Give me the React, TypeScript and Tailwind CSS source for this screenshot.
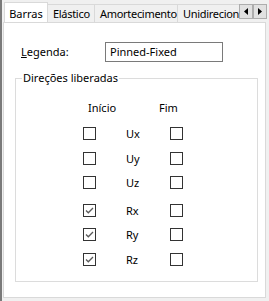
import React from 'react';

const font = { fontFamily: '"Segoe UI", "Noto Sans", sans-serif' };

interface Dir {
  label: string;
  start: boolean;
  end: boolean;
  gap: string;
}

const dirs: Dir[] = [
  { label: 'Ux', start: false, end: false, gap: 'mt-[11px]' },
  { label: 'Uy', start: false, end: false, gap: 'mt-[12px]' },
  { label: 'Uz', start: false, end: false, gap: 'mt-[11px]' },
  { label: 'Rx', start: true, end: false, gap: 'mt-[15px]' },
  { label: 'Ry', start: true, end: false, gap: 'mt-[11px]' },
  { label: 'Rz', start: true, end: false, gap: 'mt-[12px]' },
];

function Check({ checked }: { checked: boolean }) {
  return (
    <div className="w-[13px] h-[13px] border border-[#333333] bg-white shrink-0">
      {checked && (
        <svg width="11" height="11" viewBox="0 0 11 11">
          <path d="M2 5.5 L4.3 7.8 L9 3" fill="none" stroke="#5a5a5a" strokeWidth="1.3" />
        </svg>
      )}
    </div>
  );
}

function Arrow({ dir }: { dir: 'left' | 'right' }) {
  return (
    <div className="w-[14px] h-[15px] bg-[#e1e1e1] border border-[#adadad] flex items-center justify-center">
      <svg width="4" height="7" viewBox="0 0 4 7">
        {dir === 'left' ? <path d="M4 0 L0 3.5 L4 7 Z" fill="#000" /> : <path d="M0 0 L4 3.5 L0 7 Z" fill="#000" />}
      </svg>
    </div>
  );
}

export default function App() {
  const tabs = ['Elástico', 'Amortecimento', 'Unidirecional'];
  const tabWidths = ['w-[47px]', 'w-[83px]', 'w-[80px]'];

  return (
    <div className="w-[269px] h-[301px] bg-[#f0f0f0] border-l-2 border-[#7a7a7a] text-[11px] text-black" style={font}>
      <div className="flex h-[22px] relative z-10">
        <div className="flex w-[235px] overflow-hidden ml-[2px]">
          <div className="w-[44px] h-[21px] mt-[2px] shrink-0 bg-white border border-b-0 border-[#d9d9d9] flex items-center justify-center leading-none">
            Barras
          </div>
          {tabs.map((t, i) => (
            <div
              key={t}
              className={`${tabWidths[i]} h-[18px] mt-[4px] shrink-0 border-t border-r border-[#d9d9d9] bg-[#f0f0f0] flex items-center pl-[5px] leading-none whitespace-nowrap tracking-[-0.3px]`}
            >
              {t}
            </div>
          ))}
        </div>
        <div className="flex mt-[4px]">
          <Arrow dir="left" />
          <Arrow dir="right" />
        </div>
      </div>

      <div className="ml-px w-[263px] h-[276px] bg-white border border-[#d9d9d9]">
        <div className="flex items-center pt-[19px] pl-[17px]">
          <span className="w-[84px]">
            <span className="underline">L</span>egenda:
          </span>
          <div className="w-[118px] h-[20px] border border-[#7a7a7a] flex items-center pl-[4px]">Pinned-Fixed</div>
        </div>

        <div className="relative ml-[11px] mt-[16px] w-[243px] h-[204px] border border-[#dcdcdc]">
          <span className="absolute -top-[9px] left-[6px] bg-white px-px leading-[16px]">Direções liberadas</span>

          <div className="flex pt-[21px] pl-[72px] leading-[16px]">
            <span className="w-[71px]">Início</span>
            <span>Fim</span>
          </div>

          {dirs.map((d) => (
            <div key={d.label} className={`flex items-center h-[13px] pl-[67px] ${d.gap}`}>
              <Check checked={d.start} />
              <span className="ml-[30px] w-[44px] leading-none">{d.label}</span>
              <Check checked={d.end} />
            </div>
          ))}
        </div>
      </div>
    </div>
  );
}
